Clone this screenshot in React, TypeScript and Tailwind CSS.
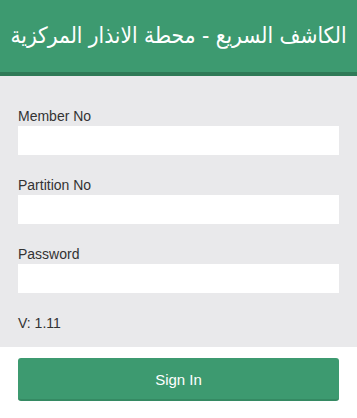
export default function App() {
  const fields = ['Member No', 'Partition No', 'Password']
  return (
    <div className="w-[357px] min-h-[418px] bg-white font-['Liberation_Sans','DejaVu_Sans',Arial,sans-serif] text-[#333]">
      <header
        dir="rtl"
        className="h-[76px] bg-[#3d9a70] border-b-4 border-[#2f7a57] px-[8px] flex items-center justify-center overflow-hidden"
      >
        <h1 className="text-white text-[22.5px] leading-none mt-[-2px] whitespace-nowrap font-['DejaVu_Sans_Condensed','DejaVu_Sans',sans-serif]">
          الكاشف السريع - محطة الانذار المركزية
        </h1>
      </header>
      <div className="bg-[#e9e9eb] px-[18px] pt-[30px] pb-[14px]">
        {fields.map((f) => (
          <div key={f} className="mb-[20px]">
            <label className="block text-[14px] leading-[20px]">{f}</label>
            <input
              type={f === 'Password' ? 'password' : 'text'}
              className="block w-full h-[29px] bg-white outline-none"
            />
          </div>
        ))}
        <p className="text-[14px] leading-[20px]">V: 1.11</p>
      </div>
      <div className="px-[18px] pt-[11px]">
        <button className="w-full h-[43px] rounded-[3px] bg-[#3d9a70] border-b-2 border-[#358a63] text-white text-[15px] pt-[3px]">
          Sign In
        </button>
      </div>
    </div>
  )
}
